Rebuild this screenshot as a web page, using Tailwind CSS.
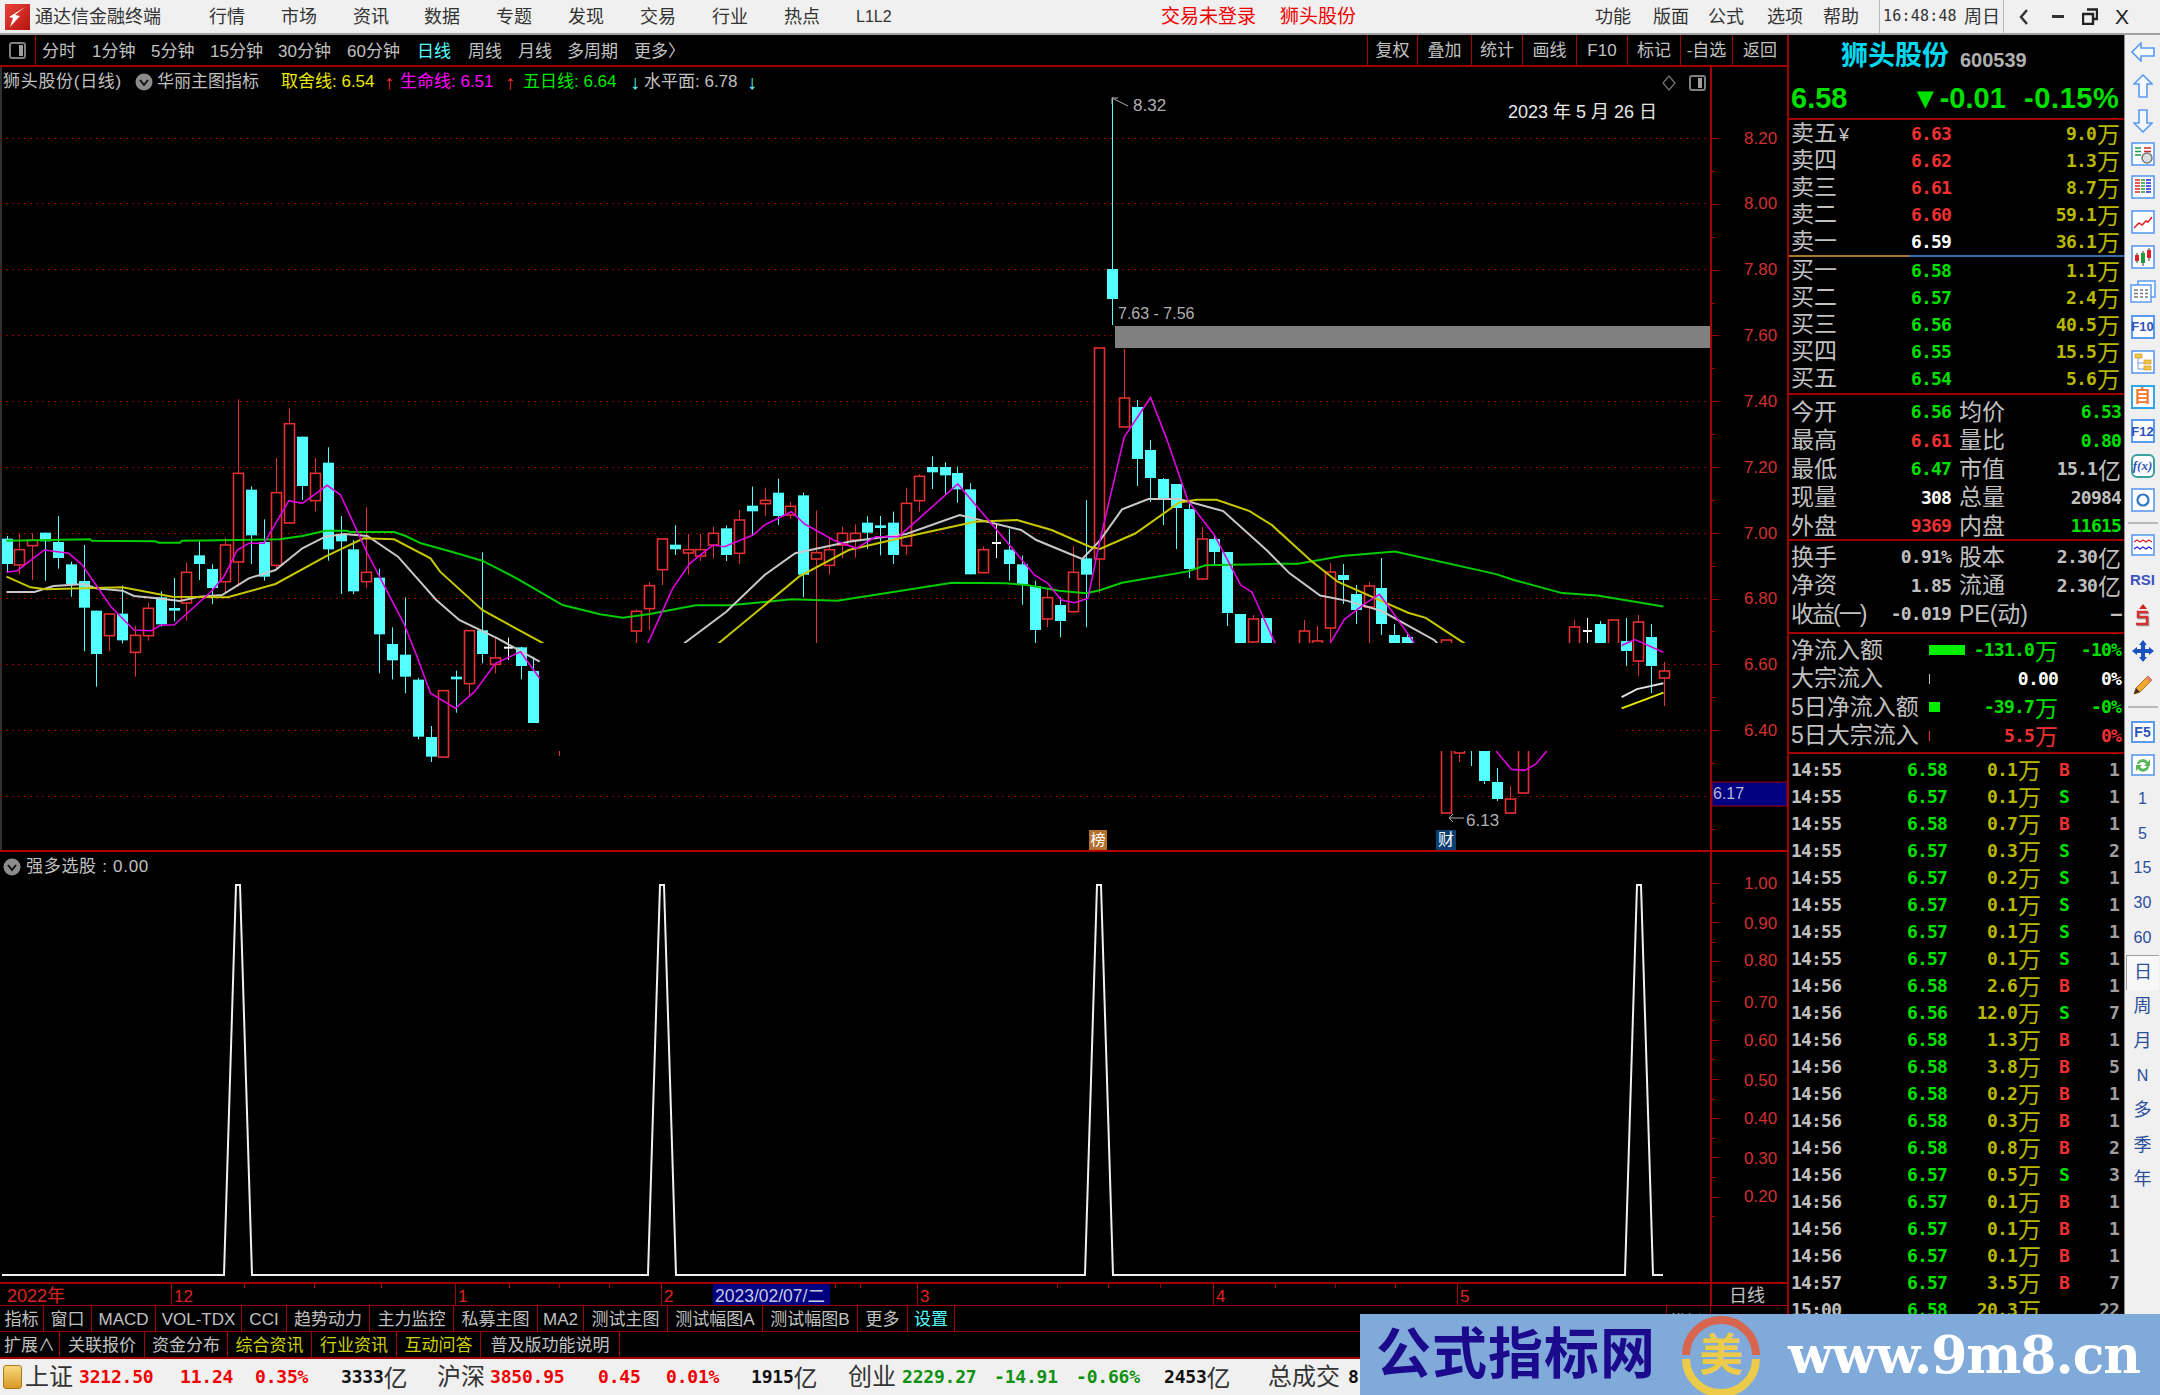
<!DOCTYPE html>
<html lang="zh-CN">

<head>
    <meta charset="UTF-8">
    <meta name="viewport" content="width=device-width, initial-scale=1">
    <title>通达信金融终端</title>
    <script src="https://cdn.jsdelivr.net/npm/@tailwindcss/browser@4"></script>
</head>

<body class="bg-black">
    <div class="relative w-[2160px] h-[1395px] overflow-hidden flex flex-col font-['Liberation_Sans','Noto_Sans_CJK_SC',sans-serif] text-[#c0c0c0]">

        <!-- title bar -->
        <div class="h-[35px] bg-[#f0f0f0] border-b-2 border-[#a0a0a0] flex items-center text-[18px] text-[#333] whitespace-nowrap shrink-0">
            <div class="ml-[5px] w-[25px] h-[26px] bg-gradient-to-br from-[#e8423a] to-[#b80f0a] flex items-center justify-center">
                <svg width="20" height="22" viewBox="0 0 20 22"><path d="M17 1 L7 9 L12 10 L2 21 L5 12 L1 11 Z" fill="#fff" /></svg>
            </div>
            <div class="ml-[5px] w-[174px] pt-[1px]">通达信金融终端</div>
            <div class="w-[72px] pt-[1px]">行情</div>
            <div class="w-[72px] pt-[1px]">市场</div>
            <div class="w-[71px] pt-[1px]">资讯</div>
            <div class="w-[72px] pt-[1px]">数据</div>
            <div class="w-[72px] pt-[1px]">专题</div>
            <div class="w-[72px] pt-[1px]">发现</div>
            <div class="w-[72px] pt-[1px]">交易</div>
            <div class="w-[72px] pt-[1px]">行业</div>
            <div class="w-[72px] pt-[1px]">热点</div>
            <div class="w-[305px] text-[16px] pt-[1px]">L1L2</div>
            <div class="w-[119px] text-[#f00000] text-[19px] pt-[1px]">交易未登录</div>
            <div class="w-[315px] text-[#f00000] text-[19px] pt-[1px]">狮头股份</div>
            <div class="w-[58px] pt-[1px]">功能</div>
            <div class="w-[55px] pt-[1px]">版面</div>
            <div class="w-[59px] pt-[1px]">公式</div>
            <div class="w-[56px] pt-[1px]">选项</div>
            <div class="w-[56px] pt-[1px]">帮助</div>
            <div class="w-[85px] h-[33px] border-l border-[#b8b8b8] pl-[3px] flex items-center text-[15px] font-['DejaVu_Sans_Mono',monospace] tracking-[0.2px]">16:48:48</div>
            <div class="w-[39px] pt-[1px]">周日</div>
            <div class="w-[26px] h-[33px] border-l border-[#b8b8b8] flex items-center justify-end">
                <svg width="10" height="18" viewBox="0 0 10 18"><path d="M8 2 L2 9 L8 16" fill="none" stroke="#333" stroke-width="2.5" /></svg>
            </div>
            <div class="w-[36px] flex justify-end pr-[1px]"><div class="w-[12px] h-[3px] bg-[#333]"></div></div>
            <div class="w-[39px] flex justify-end pr-[6px]">
                <svg width="16" height="17" viewBox="0 0 16 17"><path d="M5 1.5 H15 V11 H11 M1 6 H11 V16 H1 Z" fill="none" stroke="#222" stroke-width="2.4" /></svg>
            </div>
            <div class="w-[36px] text-center text-[21px] text-[#222]">X</div>
        </div>

        <div class="flex flex-1 min-h-0">
            <!-- left column -->
            <div class="w-[1787px] flex flex-col shrink-0">
                <div class="h-[32px] border-b-2 border-[#a00000] flex items-center shrink-0 text-[17px] whitespace-nowrap">
                    <div class="w-[36px] h-full border-r border-[#a00000] flex items-center justify-center">
                        <div class="w-[17px] h-[17px] border-2 border-[#808080] rounded-[3px] flex justify-end p-[1px]"><div class="w-[4px] h-full bg-[#a0a0a0]"></div></div>
                    </div>
                    <div id="periods" class="flex ml-[6px] pt-[3px]"></div>
                    <div id="tools" class="flex ml-auto h-full"></div>
                </div>

                <!-- main chart -->
                <div class="relative h-[784px] shrink-0">
                    <svg id="mainChart" width="1787" height="784" viewBox="0 67 1787 784" class="block"></svg>
                    <div class="absolute left-[3px] top-[4px] flex items-center h-[22px] text-[17px] whitespace-nowrap">
                        <span class="w-[132px] tracking-[0.7px]">狮头股份(日线)</span>
                        <svg width="18" height="18" viewBox="0 0 18 18"><circle cx="9" cy="9" r="8.5" fill="#8c8c8c" /><path d="M5 7 L9 12 L13 7" fill="none" stroke="#111" stroke-width="2" /></svg>
                        <span class="ml-[4px] w-[124px]">华丽主图指标</span>
                        <span class="w-[103px] text-[#e8e800]">取舍线: 6.54</span><span class="w-[16px] text-[#f03030] text-[20px] leading-none font-bold">↑</span>
                        <span class="w-[105px] text-[#ff00ff]">生命线: 6.51</span><span class="w-[18px] text-[#f03030] text-[20px] leading-none font-bold">↑</span>
                        <span class="w-[107px] text-[#00e800]">五日线: 6.64</span><span class="w-[14px] text-[#54ffff] text-[20px] leading-none font-bold">↓</span>
                        <span class="w-[103px]">水平面: 6.78</span><span class="text-[#54ffff] text-[20px] leading-none font-bold">↓</span>
                    </div>
                    <div class="absolute left-[1508px] top-[32px] text-[18px] text-[#e8e8e8] whitespace-nowrap">2023 年 5 月 26 日</div>
                    <svg class="absolute left-[1661px] top-[7px]" width="46" height="18" viewBox="0 0 46 18">
                        <path d="M8 2 L14 9 L8 16 L2 9 Z" fill="none" stroke="#707070" stroke-width="1.3" />
                        <rect x="29" y="2" width="15" height="14" rx="2" fill="none" stroke="#808080" stroke-width="2" />
                        <rect x="37" y="4" width="4" height="10" fill="#a0a0a0" />
                    </svg>
                    <div class="absolute left-[1089px] top-[763px] w-[18px] h-[20px] bg-[#b3702c] text-white text-[15px] leading-[20px] text-center">榜</div>
                    <div class="absolute left-[1436px] top-[763px] w-[20px] h-[20px] bg-[#0d3f73] text-white text-[16px] leading-[20px] text-center">财</div>
                </div>

                <!-- indicator panel -->
                <div class="relative h-[431px] shrink-0 border-t border-[#b00000]">
                    <svg id="subChart" width="1787" height="430" viewBox="0 852 1787 430" class="block"></svg>
                    <div class="absolute left-[3px] top-[4px] flex items-center h-[22px] text-[17px] whitespace-nowrap">
                        <svg width="18" height="18" viewBox="0 0 18 18"><circle cx="9" cy="9" r="8.5" fill="#8c8c8c" /><path d="M5 7 L9 12 L13 7" fill="none" stroke="#111" stroke-width="2" /></svg>
                        <span class="ml-[5px] tracking-[0.7px]">强多选股 : 0.00</span>
                    </div>
                </div>

                <!-- date axis -->
                <div class="h-[24px] shrink-0 border-t-2 border-b border-[#a00000]">
                    <svg id="dateAxis" width="1787" height="21" viewBox="0 1284 1787 21" class="block"></svg>
                </div>

                <!-- tabs -->
                <div id="tabsA" class="h-[26px] shrink-0 border-b border-[#a00000] flex items-center text-[17px] whitespace-nowrap"></div>
                <div id="tabsB" class="h-[27px] shrink-0 border-b-2 border-[#a00000] flex items-center text-[17px] whitespace-nowrap"></div>
            </div>

            <!-- quote panel -->
            <div class="w-[337px] shrink-0 border-l-2 border-[#a00000] flex flex-col overflow-hidden whitespace-nowrap">
                <div class="h-[85px] shrink-0 border-b-2 border-[#a00000] pl-[2px]">
                    <div class="h-[42px] flex items-center pl-[50px]">
                        <span class="text-[27px] font-bold text-[#00d8f0]">狮头股份</span>
                        <span class="ml-[11px] mt-[8px] text-[20px] font-bold text-[#b0b0b0]">600539</span>
                    </div>
                    <div class="flex text-[29px] leading-[30px] font-bold text-[#00e000] h-[30px] mt-[6px]">
                        <span class="w-[120px]">6.58</span>
                        <span class="w-[113px]">▼-0.01</span>
                        <span class="tracking-[0.6px]">-0.15%</span>
                    </div>
                </div>
                <div id="sellRows" class="shrink-0"></div>
                <div class="flex h-[2px] shrink-0"><div class="w-[120px] bg-[#a87830]"></div><div class="flex-1 bg-[#2f6ea8]"></div></div>
                <div id="buyRows" class="shrink-0 h-[138px] border-b-2 border-[#a00000]"></div>
                <div id="statsA" class="shrink-0 h-[146px] pt-[3px] border-b-2 border-[#a00000]"></div>
                <div id="statsB" class="shrink-0 h-[93px] pt-[2px] border-b-2 border-[#a00000]"></div>
                <div id="flows" class="shrink-0 h-[120px] pt-[2px] border-b-2 border-[#a00000]"></div>
                <div id="ticks" class="shrink-0 pt-[2px]"></div>
            </div>

            <!-- side toolbar -->
            <div class="flex-1 bg-[#f0f0f0] border-l border-[#909090] flex flex-col items-center text-[#2b4d9c]">
                <div class="h-[33px] shrink-0 flex items-center"><svg width="24" height="20" viewBox="0 0 24 20"><path d="M10 1 L1 10 L10 19 V14 H23 V6 H10 Z" fill="#f4f8ff" stroke="#5a9af0" stroke-width="1.6" /></svg></div>
                <div class="h-[35px] shrink-0 flex items-center"><svg width="20" height="24" viewBox="0 0 20 24"><path d="M1 10 L10 1 L19 10 H14 V23 H6 V10 Z" fill="#f4f8ff" stroke="#5a9af0" stroke-width="1.6" /></svg></div>
                <div class="h-[36px] shrink-0 flex items-center"><svg width="20" height="24" viewBox="0 0 20 24"><path d="M1 14 L10 23 L19 14 H14 V1 H6 V14 Z" fill="#f4f8ff" stroke="#5a9af0" stroke-width="1.6" /></svg></div>
                <div class="h-[30px] shrink-0 flex items-center"><svg width="24" height="24" viewBox="0 0 24 24"><rect x="1" y="1" width="22" height="22" fill="#fff" stroke="#5a9af0" stroke-width="1.6" /><path d="M4 6 H10 M4 9.5 H10 M4 13 H10" stroke="#1d9a3c" stroke-width="1.5" /><path d="M13 6 H20 M13 9.5 H20" stroke="#e02020" stroke-width="1.5" /><circle cx="16" cy="16" r="5" fill="#ddd" stroke="#777" stroke-width="1.5" /></svg></div>
                <div class="h-[35px] shrink-0 flex items-center"><svg width="24" height="24" viewBox="0 0 24 24"><rect x="1" y="1" width="22" height="22" fill="#fff" stroke="#5a9af0" stroke-width="1.6" /><path d="M4 5H9M4 8H9M4 11H9M4 14H9M4 17H9" stroke="#e02020" stroke-width="1.6" /><path d="M10 5H14M10 8H14M10 11H14M10 14H14M10 17H14" stroke="#1d9a3c" stroke-width="1.6" /><path d="M15 5H20M15 8H20M15 11H20M15 14H20M15 17H20" stroke="#2020e0" stroke-width="1.6" /></svg></div>
                <div class="h-[35px] shrink-0 flex items-center"><svg width="24" height="24" viewBox="0 0 24 24"><rect x="1" y="1" width="22" height="22" fill="#fff" stroke="#5a9af0" stroke-width="1.6" /><path d="M3 18 L8 13 L11 15 L15 11 L17 12 L21 7" fill="none" stroke="#e02020" stroke-width="1.5" /></svg></div>
                <div class="h-[35px] shrink-0 flex items-center"><svg width="24" height="24" viewBox="0 0 24 24"><rect x="1" y="1" width="22" height="22" fill="#fff" stroke="#5a9af0" stroke-width="1.6" /><path d="M6 8V18M12 6V21M18 3V16" stroke="#333" stroke-width="1" /><rect x="4" y="10" width="4" height="6" fill="#e02020" /><rect x="10" y="8" width="4" height="10" fill="#1d9a3c" /><rect x="16" y="5" width="4" height="8" fill="#e02020" /></svg></div>
                <div class="h-[35px] shrink-0 flex items-center"><svg width="26" height="23" viewBox="0 0 26 23"><rect x="8" y="1" width="17" height="16" fill="#fff" stroke="#5a9af0" stroke-width="1.5" /><rect x="1" y="5" width="20" height="17" fill="#fff" stroke="#5a9af0" stroke-width="1.5" /><path d="M4 10H8M10 10H13M15 10H18M4 13.5H8M10 13.5H13M15 13.5H18M4 17H8M10 17H13M15 17H18" stroke="#777" stroke-width="1.5" /></svg></div>
                <div class="h-[35px] shrink-0 flex items-center"><div class="w-[24px] h-[24px] bg-white border-2 border-[#5a9af0] flex items-center justify-center text-[13px] leading-none text-[#2f53b8] font-bold">F10</div></div>
                <div class="h-[35px] shrink-0 flex items-center"><svg width="24" height="24" viewBox="0 0 24 24"><rect x="1" y="1" width="22" height="22" fill="#fff" stroke="#5a9af0" stroke-width="1.6" /><path d="M7 8V19H14M7 13H14" fill="none" stroke="#7a9ad0" stroke-width="1" /><rect x="4" y="4" width="7" height="4" fill="#f4c542" stroke="#c09020" stroke-width=".6" /><rect x="13" y="10" width="7" height="4" fill="#f4c542" stroke="#c09020" stroke-width=".6" /><rect x="13" y="16" width="7" height="4" fill="#f4c542" stroke="#c09020" stroke-width=".6" /></svg></div>
                <div class="h-[35px] shrink-0 flex items-center"><div class="w-[24px] h-[24px] bg-white border-2 border-[#30a8e8] flex items-center justify-center text-[17px] leading-none text-[#f07830] font-bold">自</div></div>
                <div class="h-[34px] shrink-0 flex items-center"><div class="w-[24px] h-[24px] bg-white border-2 border-[#5a9af0] flex items-center justify-center text-[13px] leading-none text-[#2f53b8] font-bold">F12</div></div>
                <div class="h-[35px] shrink-0 flex items-center"><div class="w-[24px] h-[24px] bg-white border-2 border-[#3aa0a0] rounded-[6px] flex items-center justify-center text-[13px] leading-none text-[#2f53b8] italic font-['Liberation_Serif',serif] font-bold">f(x)</div></div>
                <div class="h-[33px] shrink-0 flex items-center"><svg width="24" height="24" viewBox="0 0 24 24"><rect x="1" y="1" width="22" height="22" fill="#fff" stroke="#5a9af0" stroke-width="1.6" /><circle cx="12" cy="12" r="5.5" fill="none" stroke="#2f78c8" stroke-width="2.2" /></svg></div>
                <div class="w-[30px] h-[2px] shrink-0 bg-[#b8b8b8] mt-[6px] mb-[6px]"></div>
                <div class="h-[30px] shrink-0 flex items-center"><svg width="24" height="22" viewBox="0 0 24 22"><rect x="1" y="1" width="22" height="20" fill="#fff" stroke="#5a9af0" stroke-width="1.6" /><path d="M3 8 L6 6 L9 8 L12 6 L15 8 L18 6 L21 8" fill="none" stroke="#e02020" stroke-width="1.2" /><path d="M3 15 L6 13 L9 15 L12 13 L15 15 L18 13 L21 15" fill="none" stroke="#2020e0" stroke-width="1.2" /></svg></div>
                <div class="h-[40px] shrink-0 flex items-center text-[15px] font-bold text-[#3c52c0]">RSI</div>
                <div class="h-[30px] shrink-0 flex items-center"><svg width="20" height="24" viewBox="0 0 20 24"><path d="M10 1 L14 6 H6 Z" fill="#d02020" /><path d="M16 10 H6 V15 H15 V22 H4" fill="none" stroke="#999" stroke-width="2.5" /><path d="M15 9 H5 V14 H14 V21 H3" fill="none" stroke="#d83030" stroke-width="2.5" /></svg></div>
                <div class="h-[42px] shrink-0 flex items-center"><svg width="24" height="24" viewBox="0 0 24 24"><path d="M12 1 L16 6 H14 V10 H18 V8 L23 12 L18 16 V14 H14 V18 H16 L12 23 L8 18 H10 V14 H6 V16 L1 12 L6 8 V10 H10 V6 H8 Z" fill="#1a52c0" /></svg></div>
                <div class="h-[26px] shrink-0 flex items-center"><svg width="22" height="22" viewBox="0 0 22 22"><path d="M2 20 L4 14 L16 2 L20 6 L8 18 Z" fill="#f0a830" stroke="#a87820" stroke-width="1" /><path d="M16 2 L20 6 L18 8 L14 4 Z" fill="#e87878" /><path d="M2 20 L4 14 L8 18 Z" fill="#403020" /></svg></div>
                <div class="w-[30px] h-[2px] shrink-0 bg-[#b8b8b8] mt-[8px] mb-[8px]"></div>
                <div class="h-[32px] shrink-0 flex items-center"><div class="w-[24px] h-[22px] bg-white border-2 border-[#5a9af0] flex items-center justify-center text-[14px] leading-none text-[#2f53b8] font-bold">F5</div></div>
                <div class="h-[34px] shrink-0 flex items-center"><svg width="24" height="22" viewBox="0 0 24 22"><rect x="1" y="1" width="22" height="20" fill="#fff" stroke="#5a9af0" stroke-width="1.6" /><path d="M6 10 A6 6 0 0 1 17 8 L19 5 V12 H13 L15 10 A4 4 0 0 0 8 10 Z M18 12 A6 6 0 0 1 7 15 L5 17 V11 H11 L9 13 A4 4 0 0 0 16 12 Z" fill="#58b858" /></svg></div>
                <div class="h-[34.6px] shrink-0 flex items-center text-[16px]">1</div>
                <div class="h-[34.6px] shrink-0 flex items-center text-[16px]">5</div>
                <div class="h-[34.6px] shrink-0 flex items-center text-[16px]">15</div>
                <div class="h-[34.6px] shrink-0 flex items-center text-[16px]">30</div>
                <div class="h-[34.6px] shrink-0 flex items-center text-[16px]">60</div>
                <div class="w-[33px] h-[34.6px] shrink-0 flex items-center justify-center text-[18px] bg-[#f8f8f8] border-t border-l border-[#a0a0a0]">日</div>
                <div class="h-[34.6px] shrink-0 flex items-center text-[18px]">周</div>
                <div class="h-[34.6px] shrink-0 flex items-center text-[18px]">月</div>
                <div class="h-[34.6px] shrink-0 flex items-center text-[16px]">N</div>
                <div class="h-[34.6px] shrink-0 flex items-center text-[18px]">多</div>
                <div class="h-[34.6px] shrink-0 flex items-center text-[18px]">季</div>
                <div class="h-[34.6px] shrink-0 flex items-center text-[18px]">年</div>
            </div>
        </div>

        <!-- index bar -->
        <div class="h-[36px] shrink-0 bg-[#f0f0f0] flex items-center whitespace-nowrap text-[24px] text-[#333]">
            <div class="ml-[3px] w-[19px] h-[24px] rounded-[3px] bg-gradient-to-b from-[#f8d878] to-[#d89a20] border border-[#a87820]"></div>
            <div id="indexBar" class="flex items-center"></div>
        </div>

        <!-- watermark banner sits over the window -->
        <div class="absolute left-[1360px] top-[1314px] w-[800px] h-[81px] bg-[#80aad9] flex items-center">
            <div class="ml-[16px] w-[286px] text-[55px] leading-none font-bold text-[#1c0a8c] tracking-[1px]">公式指标网</div>
            <svg class="ml-[17px]" width="84" height="80" viewBox="0 0 84 80">
                <path d="M7 40 A35 35 0 0 1 77 40" fill="none" stroke="#d8654e" stroke-width="8" />
                <path d="M77 44 A35 34 0 0 1 7 44" fill="none" stroke="#eccb4a" stroke-width="8" />
                <text x="42" y="56" text-anchor="middle" font-size="44" font-weight="700" fill="#eccb4a" font-family="Noto Sans CJK SC">美</text>
            </svg>
            <div class="ml-[25px] text-[52px] leading-none font-bold text-white font-['DejaVu_Serif',serif] tracking-[-1px] whitespace-nowrap">www.9m8.cn</div>
        </div>
    </div>

    <script>
        const RED = '#e43030', CYAN = '#54ffff', AXIS = '#a00000';
        const a7 = (x, y) => [x / 2.613, 380 + y / 3];
        const a8 = (x, y) => [600 + x / 2.613, 380 + y / 3];
        const a9 = (x, y) => [1100 + x / 2.272, 320 + y / 2.904];
        const pts = (fn, list) => list.map(p => fn(p[0], p[1]));

        // [index, type, wick top, body top, body bottom, wick bottom]
        const rawCandles = [
            [0,'c',468,476,552,578],[1,'r',462,509,555,582],[2,'r',460,480,497,600],[3,'c',458,458,484,602],
            [4,'c',408,486,534,566],[5,'c',545,553,612,650],[6,'c',495,603,683,814],[7,'c',692,692,822,920],
            [8,'r',702,702,767,813],[9,'c',617,701,781,790],[10,'r',738,766,817,890],[11,'r',670,685,767,782],
            [12,'c',634,652,733,740],[13,'c',594,684,692,724],[14,'r',548,577,669,722],[15,'c',484,526,552,600],
            [16,'c',553,567,624,673],[17,'r',473,495,605,640],[18,'r',58,280,546,620],[19,'c',319,329,466,552],
            [20,'c',418,486,590,602],[21,'r',234,338,556,570],[22,'r',85,131,429,429],[23,'c',170,170,318,360],
            [24,'r',234,280,362,394],[25,'c',202,248,508,542],[26,'c',408,462,484,642],[27,'c',480,508,634,642],
            [28,'r',382,577,605,625],[29,'c',566,593,763,880],[30,'c',742,792,841,898],[31,'c',652,824,890,940],
            [32,'c',893,899,1070,1078],[33,'c',1038,1071,1130,1146],[34,'r',932,932,1131,1131],[35,'c',872,890,898,998],
            [36,'r',752,752,911,948],[37,'c',517,751,822,850],[38,'r',770,834,853,880],[39,'w',773,800,806,840],
            [40,'c',800,802,858,898],[41,'c',830,873,1029,1029],[43,'r',960,960,1080,1128],
            [49,'r',688,694,753,850],[50,'r',607,617,686,750],[51,'r',477,477,569,615],[52,'c',436,494,508,525],
            [53,'r',462,509,519,583],[54,'r',462,509,528,543],[55,'r',440,460,495,535],[56,'c',436,445,525,543],
            [57,'r',390,420,520,552],[58,'c',320,377,394,465],[59,'r',323,361,371,408],[60,'c',296,338,408,435],
            [61,'r',365,379,405,416],[62,'c',338,346,584,652],[63,'r',391,518,537,850],[64,'r',475,509,556,584],
            [65,'r',440,460,495,535],[66,'r',433,460,480,533],[67,'c',409,428,458,507],[68,'c',408,436,444,526],
            [69,'c',395,428,525,552],[70,'r',323,370,497,525],[71,'r',283,289,362,395],[72,'c',229,261,277,327],
            [73,'c',247,261,286,345],[74,'c',260,279,328,368],[75,'c',310,328,583,583],[76,'r',499,509,578,578],
            [77,'w',432,486,489,534],[78,'c',446,509,552,602],[79,'c',527,553,612,674],[80,'c',602,618,750,800],
            [81,'r',625,653,717,742],[82,'c',652,675,723,772],[83,'r',498,577,695,700],[84,'c',360,535,584,742],
        ].map(c => [c[0], c[1], 380 + c[2] / 3, 380 + c[3] / 3, 380 + c[4] / 3, 380 + c[5] / 3]);

        const candles = rawCandles.concat([
            [85,'r',348,348,559,593],[86,'c',99,269,299,325],[87,'r',349,398,427,427],[88,'c',400,407,459,486],
            [89,'c',440,450,478,502],[90,'c',478,479,500,525],[91,'c',484,484,508,549],[92,'c',503,509,569,578],
            [93,'r',527,539,579,579],[94,'c',535,539,552,564],[95,'c',552,552,613,626],[96,'c',614,614,700,700],
            [97,'r',615,619,642,644],[98,'c',618,618,700,700],[101,'r',620,631,660,670],[102,'r',626,641,660,670],
            [103,'r',563,572,628,660],[104,'c',564,575,580,604],[105,'c',585,594,610,624],[106,'r',582,586,607,655],
            [107,'c',558,588,624,635],[108,'c',624,635,664,680],[109,'c',632,637,700,700],
            [112,'r',640,640,813,813],[113,'r',745,745,753,762],[114,'c',700,700,745,766],[115,'c',700,700,781,784],
            [116,'c',768,782,799,801],[117,'r',786,799,813,814],[118,'r',700,700,793,794],
            [122,'r',620,627,670,670],[123,'w',618,630,632,655],[124,'c',621,624,670,670],[125,'r',620,620,655,655],
            [126,'c',618,641,651,666],[127,'r',615,622,661,676],[128,'c',624,637,666,693],[129,'r',662,671,678,706],
        ]);

        function drawCandle(c) {
            const x = Math.round(6.5 + 12.85 * c[0]);
            const col = c[1] === 'r' ? RED : c[1] === 'w' ? '#ffffff' : CYAN;
            const wick = `<rect x="${x}" y="${c[2]}" width="1" height="${c[5] - c[2]}" fill="${col}"/>`;
            if (c[1] === 'c') return wick + `<rect x="${x - 5}" y="${c[3]}" width="11" height="${Math.max(c[4] - c[3], 2)}" fill="${col}"/>`;
            if (c[1] === 'w') return wick + `<rect x="${x - 4}" y="${c[3]}" width="9" height="2" fill="${col}"/>`;
            return `<rect x="${x}" y="${c[2]}" width="1" height="${c[3] - c[2]}" fill="${col}"/>`
                + `<rect x="${x}" y="${c[4]}" width="1" height="${c[5] - c[4]}" fill="${col}"/>`
                + `<rect x="${x - 4.5}" y="${c[3]}" width="10" height="${c[4] - c[3]}" fill="#000" stroke="${col}" stroke-width="1.6"/>`;
        }

        const green = pts(a7, [[17,482],[235,478],[240,482],[405,484],[415,488],[470,488],[475,482],[730,478],[790,468],[850,452],[905,452],[915,456],[1030,456],[1060,468],[1100,490],[1180,515],[1260,542],[1350,595],[1440,655],[1470,675],[1568,703]])
            .concat(pts(a8, [[60,713],[130,702],[250,676],[340,676],[500,658],[620,662],[920,608],[1060,610],[1115,615],[1200,632],[1270,640]]))
            .concat(pts(a9, [[0,785],[50,763],[200,730],[240,712],[400,708],[450,708],[550,685],[670,672],[900,738],[940,755],[1050,793],[1130,800],[1280,832]]));
        const whiteA = pts(a7, [[17,636],[90,636],[140,618],[220,612],[250,625],[320,632],[350,648],[410,655],[470,663],[520,650],[580,645],[650,595],[720,570],[790,505],[850,470],[900,462],[960,468],[1040,530],[1140,660],[1200,720],[1300,775],[1410,845]]);
        const whiteB = pts(a8, [[220,790],[330,695],[430,585],[510,520],[650,485],[800,462],[940,405],[1100,450],[1140,480],[1260,537]])
            .concat(pts(a9, [[0,640],[50,550],[110,520],[180,520],[280,555],[380,670],[430,735],[500,800],[560,815],[640,845],[760,930],[770,945]]));
        const yellowA = pts(a7, [[17,590],[80,622],[120,628],[320,622],[450,650],[595,652],[720,612],[850,530],[950,475],[1030,478],[1125,535],[1150,575],[1260,690],[1420,790]]);
        const yellowB = pts(a8, [[310,790],[520,590],[650,510],[800,470],[980,425],[1090,420],[1180,450],[1280,500]])
            .concat(pts(a9, [[0,665],[80,620],[180,530],[220,522],[265,522],[340,555],[390,595],[480,700],[540,760],[700,850],[740,865],[835,945]]));
        const magenta = pts(a7, [[17,577],[45,572],[115,510],[180,520],[215,555],[290,680],[350,750],[395,752],[420,735],[455,735],[550,637],[585,590],[620,510],[650,490],[690,490],[755,362],[790,370],[855,316],[890,345],[960,520],[1055,730],[1090,830],[1125,940],[1190,985],[1240,935],[1295,850],[1360,815],[1410,895]]);
        const magenta2 = pts(a8, [[125,790],[190,625],[235,550],[295,495],[325,500],[400,465],[430,435],[500,395],[535,432],[610,480],[670,505],[720,470],[780,470],[935,312],[1070,495],[1135,585],[1170,610],[1205,660],[1240,668],[1275,655]])
            .concat(pts(a9, [[0,640],[55,340],[115,225],[150,340],[200,525],[260,625],[320,770],[345,790],[400,945]]));
        const magenta3 = pts(a9, [[520,945],[555,870],[600,825],[635,797],[660,840],[718,945]]);
        const magenta4 = pts(a9, [[900,1252],[935,1305],[965,1308],[990,1290],[1015,1252]]);
        const magenta5 = pts(a9, [[1185,945],[1215,928],[1280,965]]);
        const white2 = pts(a9, [[1185,1095],[1220,1072],[1280,1055]]);
        const yellow2 = pts(a9, [[1185,1128],[1280,1082]]);

        const poly = (p, col, w) => `<polyline points="${p.map(q => q[0].toFixed(1) + ',' + q[1].toFixed(1)).join(' ')}" fill="none" stroke="${col}" stroke-width="${w}"/>`;
        const label = (x, y, t, col, size) => `<text x="${x}" y="${y}" fill="${col}" font-size="${size || 17}" font-family="Liberation Sans, Noto Sans CJK SC, sans-serif">${t}</text>`;

        function axisTicks(y0, y1, step) {
            let s = '';
            for (let y = y0, n = 0; y <= y1; y += step / 2, n++) {
                s += `<rect x="1711" y="${Math.round(y)}" width="${n % 2 ? 4 : 8}" height="1" fill="${AXIS}"/>`;
            }
            return s;
        }

        // main chart
        let main = '<rect x="0" y="67" width="2" height="784" fill="#303030"/>';
        const grid = [[138,'8.20'],[203,'8.00'],[269,'7.80'],[335,'7.60'],[401,'7.40'],[467,'7.20'],[533,'7.00'],[598,'6.80'],[664,'6.60'],[730,'6.40'],[796,'']];
        grid.forEach(g => {
            main += `<line x1="0" x2="1710" y1="${g[0] + .5}" y2="${g[0] + .5}" stroke="#8c0000" stroke-dasharray="2 4"/>`;
            if (g[1]) main += label(1744, g[0] + 6, g[1], '#d03030');
        });
        main += axisTicks(138, 830, 65.8);
        candles.forEach(c => main += drawCandle(c));
        main += poly(green, '#00cc00', 2) + poly(whiteA, '#c8c8c8', 2) + poly(whiteB, '#c8c8c8', 2) + poly(yellowA, '#c8c800', 2) + poly(yellowB, '#c8c800', 2)
            + poly(magenta, '#e000e0', 1.6) + poly(magenta2, '#e000e0', 1.6) + poly(magenta3, '#e000e0', 1.6);
        // blanked area of the capture
        main += '<rect x="540" y="643" width="1081" height="108" fill="#000"/>';
        main += poly(magenta4, '#e000e0', 1.6) + poly(magenta5, '#e000e0', 1.6) + poly(white2, '#e0e0e0', 2) + poly(yellow2, '#e8e800', 2);
        main += '<rect x="1115" y="326" width="595" height="22" fill="#808080"/>';
        main += label(1118, 319, '7.63 - 7.56', '#b0b0b0', 16);
        main += '<path d="M1112 104 V98 H1118 M1112 98 L1128 106" fill="none" stroke="#b0b0b0"/>' + label(1133, 111, '8.32', '#b0b0b0', 17);
        main += '<path d="M1464 818 H1449 M1453 814 L1449 818 L1453 822" fill="none" stroke="#b0b0b0"/>' + label(1466, 826, '6.13', '#b0b0b0', 17);
        main += `<rect x="1710" y="67" width="2" height="784" fill="${AXIS}"/><rect x="1712" y="782" width="75" height="24" fill="#000080" stroke="${AXIS}"/>` + label(1713, 799, '6.17', '#b8b8d8', 16);
        main += `<rect x="0" y="850" width="1787" height="1" fill="#b00000"/>`;
        document.getElementById('mainChart').innerHTML = main;

        // indicator panel
        let sub = `<rect x="1710" y="852" width="2" height="430" fill="${AXIS}"/>` + axisTicks(883, 1235, 39.2);
        [['1.00',883],['0.90',923],['0.80',960],['0.70',1002],['0.60',1040],['0.50',1080],['0.40',1118],['0.30',1158],['0.20',1196]].forEach(v => {
            sub += label(1744, v[1] + 6, v[0], '#d03030');
        });
        let spike = [[2, 1275]];
        [238, 662, 1099, 1639].forEach(x => spike.push([x - 14, 1275], [x - 2, 885], [x + 2, 885], [x + 14, 1275]));
        spike.push([1663, 1275]);
        sub += poly(spike, '#f0f0f0', 2);
        document.getElementById('subChart').innerHTML = sub;

        // date axis
        let dates = '';
        [171, 455, 661, 917, 1213, 1457].forEach(x => dates += `<rect x="${x}" y="1284" width="1" height="21" fill="${AXIS}"/>`);
        [244, 314, 381, 509, 559, 609, 835, 860, 1057, 1108, 1160, 1275, 1335, 1395].forEach(x => dates += `<rect x="${x}" y="1284" width="1" height="4" fill="${AXIS}"/>`);
        dates += label(7, 1302, '2022年', '#e02020', 18) + label(174, 1302, '12', '#e02020') + label(458, 1302, '1', '#e02020')
            + label(664, 1302, '2', '#e02020') + label(920, 1302, '3', '#e02020') + label(1216, 1302, '4', '#e02020') + label(1460, 1302, '5', '#e02020');
        dates += '<rect x="713" y="1284" width="117" height="21" fill="#000080"/>' + label(715, 1302, '2023/02/07/二', '#c8c8e8', 17.5);
        dates += `<rect x="1710" y="1284" width="2" height="21" fill="${AXIS}"/>` + label(1729, 1302, '日线', '#c0c0c0', 18);
        document.getElementById('dateAxis').innerHTML = dates;

        // toolbars
        document.getElementById('periods').innerHTML = [['分时',50],['1分钟',59],['5分钟',59],['15分钟',68],['30分钟',69],['60分钟',70],['日线',51,'text-[#54ffff]'],['周线',50],['月线',49],['多周期',67],['更多〉',70]]
            .map(p => `<div class="${p[2] || ''}" style="width:${p[1]}px">${p[0]}</div>`).join('');
        document.getElementById('tools').innerHTML = [['复权',50],['叠加',54],['统计',51],['画线',54],['F10',51],['标记',53],['-自选',52],['返回',55]]
            .map(p => `<div class="border-l border-[#a00000] flex items-center justify-center pt-[2px]" style="width:${p[1]}px">${p[0]}</div>`).join('');

        const cell = (t, w, extra) => `<div class="h-full border-r border-[#a00000] flex items-center justify-center ${extra || ''}" style="width:${w}px">${t}</div>`;
        document.getElementById('tabsA').innerHTML = [['指标',44],['窗口',48],['MACD',64],['VOL-TDX',86],['CCI',45],['趋势动力',83],['主力监控',84],['私募主图',84],['MA2',46],['测试主图',84],['测试幅图A',95],['测试幅图B',95],['更多',50],['设置',47,'text-[#54ffff]']]
            .map(c => cell(c[0], c[1], 'pt-[2px] ' + (c[2] || ''))).join('')
            + '<div class="ml-auto w-[45px] h-full border-l border-r border-[#a00000] pl-[3px] pt-[4px] text-[16px]">模板</div><div class="w-[76px]"></div>';
        document.getElementById('tabsB').innerHTML = [['扩展∧',60],['关联报价',85],['资金分布',83],['综合资讯',84,'text-[#d0d000]'],['行业资讯',85,'text-[#d0d000]'],['互动问答',84,'text-[#d0d000]'],['普及版功能说明',139]]
            .map(c => cell(c[0], c[1], 'pt-[3px] ' + (c[2] || ''))).join('');

        // quote panel
        const NUM = "font-['DejaVu_Sans_Mono',monospace] font-bold text-[18px] tracking-[-0.8px] leading-none";
        const CJK = "ml-[1px] font-['Noto_Sans_CJK_SC',sans-serif] font-normal text-[23px] leading-none";
        const withUnit = (num, unit, col) => `<span class="${NUM} ${col}">${num}</span>${unit ? `<span class="${CJK} ${col}">${unit}</span>` : ''}`;
        const depthRow = (name, price, col, amt, note) => `
            <div class="h-[27px] flex items-center pl-[2px] pr-[4px]">
                <span class="w-[120px] text-[23px] leading-none">${name}${note || ''}</span>
                <span class="${NUM} ${col}">${price}</span>
                <span class="ml-auto flex items-center">${withUnit(amt, '万', 'text-[#b8b800]')}</span>
            </div>`;
        document.getElementById('sellRows').innerHTML =
            depthRow('卖五', '6.63', 'text-[#f03030]', '9.0', '<span class="ml-[2px] text-[18px]">¥</span>')
            + depthRow('卖四', '6.62', 'text-[#f03030]', '1.3')
            + depthRow('卖三', '6.61', 'text-[#f03030]', '8.7')
            + depthRow('卖二', '6.60', 'text-[#f03030]', '59.1')
            + depthRow('卖一', '6.59', 'text-white', '36.1');
        document.getElementById('buyRows').innerHTML = [['买一','6.58','1.1'],['买二','6.57','2.4'],['买三','6.56','40.5'],['买四','6.55','15.5'],['买五','6.54','5.6']]
            .map(r => depthRow(r[0], r[1], 'text-[#00e000]', r[2])).join('');

        const statRow = r => `
            <div class="h-[28.5px] flex items-center pl-[2px] pr-[3px]">
                <span class="w-[60px] text-[23px] leading-none ${r[6] || ''}">${r[0]}</span>
                <span class="w-[100px] text-right ${NUM} ${r[2]}">${r[1]}</span>
                <span class="ml-[8px] w-[60px] text-[23px] leading-none">${r[3]}</span>
                <span class="flex-1 flex justify-end items-center">${r[4].includes('亿') ? withUnit(r[4].replace('亿', ''), '亿', r[5]) : withUnit(r[4], '', r[5])}</span>
            </div>`;
        const G = 'text-[#00e000]', R = 'text-[#f03030]', W = 'text-white', N = 'text-[#c0c0c0]';
        document.getElementById('statsA').innerHTML = [['今开','6.56',G,'均价','6.53',G],['最高','6.61',R,'量比','0.80',G],['最低','6.47',G,'市值','15.1亿',N],['现量','308',W,'总量','20984',N],['外盘','9369',R,'内盘','11615',G]].map(statRow).join('');
        document.getElementById('statsB').innerHTML = [['换手','0.91%',N,'股本','2.30亿',N],['净资','1.85',N,'流通','2.30亿',N],['收益(一)','-0.019',N,'PE(动)','–',N,'tracking-[-2px]']].map(statRow).join('');

        const flowRow = r => `
            <div class="h-[28.5px] flex items-center pl-[2px] pr-[3px]">
                <span class="w-[138px] text-[23px] leading-none">${r[0]}</span>
                <span class="w-[40px] flex items-center">${r[1]}</span>
                <span class="w-[89px] flex justify-end items-center">${withUnit(r[2], r[5], r[3])}</span>
                <span class="flex-1 text-right ${NUM} ${r[3]}">${r[4]}</span>
            </div>`;
        document.getElementById('flows').innerHTML = [
            ['净流入额', '<span class="w-[36px] h-[10px] bg-[#00ee00]"></span>', '-131.0', G, '-10%', '万'],
            ['大宗流入', '<span class="w-[1px] h-[10px] bg-[#c0c0c0]"></span>', '0.00', W, '0%', ''],
            ['5日净流入额', '<span class="w-[11px] h-[10px] bg-[#00ee00]"></span>', '-39.7', G, '-0%', '万'],
            ['5日大宗流入', '<span class="w-[1px] h-[10px] bg-[#f03030]"></span>', '5.5', R, '0%', '万'],
        ].map(flowRow).join('');

        const ticks = [['14:55','6.58','0.1','B','1'],['14:55','6.57','0.1','S','1'],['14:55','6.58','0.7','B','1'],['14:55','6.57','0.3','S','2'],['14:55','6.57','0.2','S','1'],['14:55','6.57','0.1','S','1'],['14:55','6.57','0.1','S','1'],['14:55','6.57','0.1','S','1'],['14:56','6.58','2.6','B','1'],['14:56','6.56','12.0','S','7'],['14:56','6.58','1.3','B','1'],['14:56','6.58','3.8','B','5'],['14:56','6.58','0.2','B','1'],['14:56','6.58','0.3','B','1'],['14:56','6.58','0.8','B','2'],['14:56','6.57','0.5','S','3'],['14:56','6.57','0.1','B','1'],['14:56','6.57','0.1','B','1'],['14:56','6.57','0.1','B','1'],['14:57','6.57','3.5','B','7'],['15:00','6.58','20.3','','22']];
        document.getElementById('ticks').innerHTML = ticks.map(t => `
            <div class="h-[27px] flex items-center pl-[2px] pr-[5px]">
                <span class="w-[116px] ${NUM} text-[#c0c0c0]">${t[0]}</span>
                <span class="w-[44px] ${NUM} text-[#00e000]">${t[1]}</span>
                <span class="w-[90px] flex justify-end items-center">${withUnit(t[2], '万', 'text-[#b8b800]')}</span>
                <span class="ml-[18px] w-[14px] ${NUM} ${t[3] === 'S' ? 'text-[#00e000]' : 'text-[#f03030]'}">${t[3]}</span>
                <span class="flex-1 text-right ${NUM} text-[#a0a0a0]">${t[4]}</span>
            </div>`).join('');

        // index bar
        const NUMS = "font-['DejaVu_Sans_Mono',monospace] font-bold text-[18px] tracking-[-0.2px] leading-none";
        const RD = NUMS + ' text-[#f00000]', GN = NUMS + ' text-[#109010]', BK = NUMS + ' text-[#111]';
        const yi = `<span class="font-['Noto_Sans_CJK_SC',sans-serif] font-normal text-[24px] leading-none text-[#333] tracking-normal">亿</span>`;
        const barItems = [
            ['上证', 25, ''], ['3212.50', 79, RD], ['11.24', 180, RD], ['0.35%', 255, RD], ['3333' + yi, 341, BK],
            ['沪深', 437, ''], ['3850.95', 490, RD], ['0.45', 598, RD], ['0.01%', 666, RD], ['1915' + yi, 751, BK],
            ['创业', 848, ''], ['2229.27', 902, GN], ['-14.91', 994, GN], ['-0.66%', 1076, GN], ['2453' + yi, 1164, BK],
            ['总成交', 1268, ''], ['8', 1348, BK],
        ];
        document.getElementById('indexBar').innerHTML = barItems.map((b, i) => {
            const next = i + 1 < barItems.length ? barItems[i + 1][1] : b[1] + 40;
            return `<span class="flex items-center ${b[2]}" style="width:${next - b[1]}px;${i === 0 ? 'margin-left:3px' : ''}">${b[0]}</span>`;
        }).join('');
    </script>
</body>

</html>
